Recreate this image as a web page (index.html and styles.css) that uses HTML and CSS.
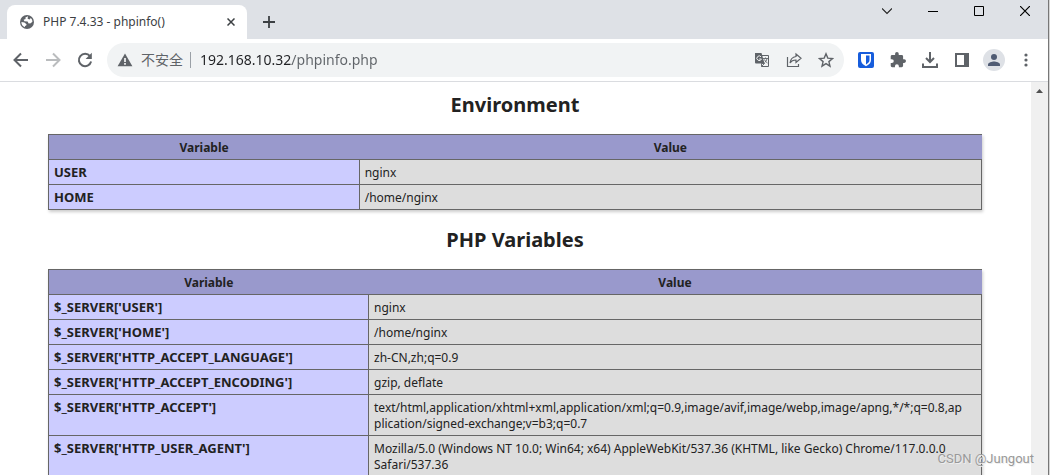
FILE: index.html
```html
<!DOCTYPE html>
<html lang="zh-CN">
<head>
<meta charset="utf-8">
<title>PHP 7.4.33 - phpinfo()</title>
<link rel="stylesheet" href="styles.css">
</head>
<body>
<div class="window">
  <header class="titlebar">
    <div class="tab">
      <svg class="globe" width="14" height="14" viewBox="0 0 14 14"><circle cx="7" cy="7" r="7" fill="#5f6368"/><path d="M8 1.3 5.4 2.6 5.6 4 3.6 4.7 4.4 6.2 7.6 6.5 8.6 8.4 10.8 8.2 12.5 6.5A5.6 5.6 0 0 0 10.8 3L9.6 4.4 7.6 3.8zM1.4 7 4.4 7.6 6.6 9.2 6.2 10.6 5 11 4.8 12.2A5.6 5.6 0 0 1 1.4 7z" fill="#fff"/></svg>
      <span class="tab-title">PHP 7.4.33 - phpinfo()</span>
      <button class="tab-close" aria-label="Close tab"><svg width="8" height="8" viewBox="0 0 8 8"><path d="M.5.5 7.500 7.500M7.500.5.5 7.500" stroke="#3c4043" stroke-width="1.500"/></svg></button>
    </div>
    <button class="new-tab" aria-label="New tab"><svg width="12" height="12" viewBox="0 0 12 12"><path d="M6 0v12M0 6h12" stroke="#3c4043" stroke-width="1.8"/></svg></button>
    <div class="captions">
      <button aria-label="Search tabs"><svg width="10" height="10" viewBox="0 0 10 10"><path d="M0 2.5 5 7.5 10 2.5" fill="none" stroke="#222" stroke-width="1.1"/></svg></button>
      <button aria-label="Minimize"><svg width="10" height="10" viewBox="0 0 10 10"><path d="M0 5.5h10" stroke="#000"/></svg></button>
      <button aria-label="Maximize"><svg width="10" height="10" viewBox="0 0 10 10"><path d="M.5.5h9v9h-9z" fill="none" stroke="#000"/></svg></button>
      <button aria-label="Close"><svg width="10" height="10" viewBox="0 0 10 10"><path d="M0 0 10 10M10 0 0 10" stroke="#000" stroke-width="1.2"/></svg></button>
    </div>
  </header>

  <nav class="toolbar">
    <button class="nav-button" aria-label="Back"><svg width="16" height="16" viewBox="0 0 16 16"><path d="M15 8H2M8 1.5 1.5 8 8 14.500" fill="none" stroke="#5f6368" stroke-width="2"/></svg></button>
    <button class="nav-button" aria-label="Forward" disabled><svg width="16" height="16" viewBox="0 0 16 16"><path d="M1 8H14M8 1.500 14.500 8 8 14.500" fill="none" stroke="#babcbe" stroke-width="2"/></svg></button>
    <button class="nav-button" aria-label="Reload"><svg width="16" height="16" viewBox="0 0 16 16"><path d="M13 4.200A6.200 6.200 0 1 0 14.100 9.500" fill="none" stroke="#5f6368" stroke-width="2"/><path d="M14.800.8V7H8.600z" fill="#5f6368"/></svg></button>
    <div class="address">
      <svg width="16" height="14" viewBox="0 0 16 14"><path d="M8 .4 15.400 13.300H.6z" fill="#5f6368"/><path d="M8 5v4M8 10v1.700" stroke="#fff" stroke-width="1.600"/></svg>
      <label class="security" for="url">不安全</label>
      <input class="url" id="url" type="text" value="192.168.10.32/phpinfo.php">
      <button aria-label="Translate"><svg width="16" height="16" viewBox="0 0 16 16"><path d="M5.500 3.500h9v11h-7" fill="none" stroke="#5f6368"/><path d="M1 1h6.500l3 10.500H2A1 1 0 0 1 1 10.500z" fill="#5f6368"/><path d="M7 4.800A2.300 2.300 0 1 0 7.400 7H5.200" fill="none" stroke="#f1f3f4" stroke-width="1"/><path d="M9 6.500h5M11.500 5.500v1M13 6.500c-.4 2-1.500 3.500-2.500 4.300M10.500 7.500c.5 1.500 1.500 2.600 3 3.500M7.500 11.500v3l3-3z" fill="none" stroke="#5f6368" stroke-width=".9"/></svg></button>
      <button aria-label="Share"><svg width="16" height="16" viewBox="0 0 16 16"><path d="M1.500 5v9.500h11V12M10 2l5 4.200-5 4.200V8C7.500 7.900 5.500 8.700 4 11c.4-3.500 2.600-6 6-6.500z" fill="none" stroke="#5f6368" stroke-width="1.200"/></svg></button>
      <button aria-label="Bookmark"><svg width="16" height="16" viewBox="0 0 16 16"><path d="m8 1.800 1.800 4.300 4.700.4-3.600 3.100 1.100 4.600L8 11.700l-4 2.500 1.100-4.600L1.500 6.500l4.700-.4z" fill="none" stroke="#5f6368" stroke-width="1.400"/></svg></button>
    </div>
    <div class="extensions">
      <button aria-label="Bitwarden"><svg width="16" height="16" viewBox="0 0 16 16"><rect width="16" height="16" rx="2" fill="#175ddc"/><path d="M3 2h10v6c0 3-2.200 4.800-5 6.300C5.200 12.800 3 11 3 8z" fill="#fff"/><path d="M8 3.500h3.500V8c0 2-1.500 3.300-3.500 4.500z" fill="#175ddc"/></svg></button>
      <button aria-label="Extensions"><svg width="16" height="16" viewBox="1 1 22 22"><path fill="#5f6368" d="M20.500 11H19V7a2 2 0 0 0-2-2h-4V3.500a2.500 2.500 0 0 0-5 0V5H4a2 2 0 0 0-2 2v3.800h1.500a2.700 2.700 0 0 1 0 5.400H2V20a2 2 0 0 0 2 2h3.800v-1.500a2.700 2.700 0 0 1 5.400 0V22H17a2 2 0 0 0 2-2v-4h1.500a2.500 2.500 0 0 0 0-5z"/></svg></button>
      <button aria-label="Downloads"><svg width="16" height="16" viewBox="0 0 16 16"><path d="M8 0v9.500M4 6l4 4 4-4M1 11.500V15h14v-3.500" fill="none" stroke="#5f6368" stroke-width="2"/></svg></button>
      <button aria-label="Side panel"><svg width="14" height="14" viewBox="0 0 14 14"><path d="M0 0h14v14H0zM2 2v10h7V2z" fill="#5f6368" fill-rule="evenodd"/></svg></button>
      <button class="profile" aria-label="Profile"><svg width="22" height="22" viewBox="0 0 22 22"><circle cx="11" cy="11" r="11" fill="#dee1e6"/><circle cx="11" cy="8" r="3" fill="#4f5b73"/><path d="M5 17v-1.500c0-2 4-3 6-3s6 1 6 3V17z" fill="#4f5b73"/></svg></button>
      <button aria-label="Menu"><svg width="4" height="14" viewBox="0 0 4 14"><g fill="#5f6368"><circle cx="2" cy="2" r="1.600"/><circle cx="2" cy="7" r="1.600"/><circle cx="2" cy="12" r="1.600"/></g></svg></button>
    </div>
  </nav>

  <div class="viewport">
    <main class="page">
      <h2>Environment</h2>
      <table class="environment">
        <thead><tr><th scope="col">Variable</th><th scope="col">Value</th></tr></thead>
        <tbody>
          <tr><td>USER</td><td>nginx</td></tr>
          <tr><td>HOME</td><td>/home/nginx</td></tr>
        </tbody>
      </table>
      <h2>PHP Variables</h2>
      <table class="variables">
        <thead><tr><th scope="col">Variable</th><th scope="col">Value</th></tr></thead>
        <tbody>
          <tr><td>$_SERVER['USER']</td><td>nginx</td></tr>
          <tr><td>$_SERVER['HOME']</td><td>/home/nginx</td></tr>
          <tr><td>$_SERVER['HTTP_ACCEPT_LANGUAGE']</td><td>zh-CN,zh;q=0.9</td></tr>
          <tr><td>$_SERVER['HTTP_ACCEPT_ENCODING']</td><td>gzip, deflate</td></tr>
          <tr><td>$_SERVER['HTTP_ACCEPT']</td><td>text/html,application/xhtml+xml,application/xml;q=0.9,image/avif,image/webp,image/apng,*/*;q=0.8,ap<br>plication/signed-exchange;v=b3;q=0.7</td></tr>
          <tr><td>$_SERVER['HTTP_USER_AGENT']</td><td>Mozilla/5.0 (Windows NT 10.0; Win64; x64) AppleWebKit/537.36 (KHTML, like Gecko) Chrome/117.0.0.0<br>Safari/537.36</td></tr>
        </tbody>
      </table>
    </main>
    <div class="scrollbar"><svg width="7" height="4" viewBox="0 0 7 4"><path d="M3.500 0 7 4H0z" fill="#505050"/></svg></div>
  </div>
  <div class="watermark">CSDN @Jungout</div>
</div>
</body>
</html>
```
FILE: styles.css
```css
* { box-sizing: border-box; }

body {
  margin: 0;
  font-family: "Noto Sans", "Noto Sans CJK SC", sans-serif;
  background: #d5d5d5;
  color: #222;
}

button {
  display: flex;
  align-items: center;
  justify-content: center;
  padding: 0;
  border: 0;
  background: none;
}

svg { display: block; }

.window {
  position: relative;
  display: flex;
  flex-direction: column;
  height: 100vh;
  margin-right: 1px;
  overflow: hidden;
  border-right: 1px solid #777;
  background: #fff;
}

.titlebar {
  display: flex;
  align-items: flex-end;
  height: 39px;
  padding-left: 7px;
  background: #dee1e6;
}

.tab {
  display: flex;
  align-items: center;
  width: 240px;
  height: 34px;
  padding: 0 12px 0 13px;
  border-radius: 8px 8px 0 0;
  background: #fff;
}

.tab-title {
  flex: 1;
  margin-left: 9px;
  font-size: 12px;
  line-height: 16px;
  color: #3c4043;
}

.new-tab {
  width: 44px;
  height: 34px;
}

.captions {
  display: flex;
  align-self: flex-start;
  margin-left: auto;
}

.captions button {
  width: 46px;
  height: 22px;
}

.toolbar {
  display: flex;
  align-items: center;
  height: 43px;
  padding: 0 6px 0 5px;
  border-bottom: 1px solid #dadce0;
}

.nav-button {
  width: 32px;
  height: 32px;
}

.address {
  display: flex;
  flex: 1;
  align-items: center;
  height: 34px;
  margin-left: 6px;
  padding: 0 2px 0 10px;
  border-radius: 17px;
  background: #f1f3f4;
}

.security {
  margin-left: 8px;
  padding-right: 7px;
  border-right: 1px solid #9aa0a6;
  font-size: 14px;
  line-height: 16px;
  color: #5f6368;
}

.url {
  flex: 1;
  min-width: 0;
  height: 24px;
  margin-left: 9px;
  padding: 0;
  border: 0;
  font: 14px/24px "Noto Sans", sans-serif;
  background: linear-gradient(90deg, #202124 92px, #5f6368 92px);
  background-clip: text;
  -webkit-text-fill-color: transparent;
}

.address button {
  width: 32px;
  height: 32px;
}

.extensions {
  display: flex;
  align-items: center;
  margin-left: 6px;
}

.extensions button {
  width: 32px;
  height: 32px;
}

.viewport {
  display: flex;
  flex: 1;
  min-height: 0;
}

.page {
  flex: 1;
  padding: 0 49px 0 48px;
  overflow: hidden;
}

h2 {
  margin: 8px 0 15px;
  font-size: 20px;
  line-height: 29px;
  text-align: center;
}

table {
  width: 100%;
  margin-bottom: 15px;
  border-collapse: collapse;
  table-layout: fixed;
  box-shadow: 1px 2px 3px #ccc;
  font-size: 12px;
  line-height: 16px;
}

th,
td {
  padding: 5px 5px 3px;
  border: 1px solid #666;
}

th {
  border-right: 0;
  border-left: 0;
  background: #99c;
}

th:first-child { border-left: 1px solid #666; }

td {
  background: #ddd;
  vertical-align: top;
  white-space: nowrap;
}

td:first-child {
  padding: 4px 5px;
  background: #ccf;
  font-size: 13px;
  font-weight: 700;
}

.environment th:first-child { width: 33.3%; }
.variables th:first-child { width: 34.3%; }

.scrollbar {
  display: flex;
  justify-content: center;
  width: 17px;
  padding-top: 7px;
  background: #f0f0f0;
}

.watermark {
  position: absolute;
  right: 14px;
  bottom: 8px;
  font: 13px/16px Roboto, sans-serif;
  color: #999;
  text-shadow: 1px 1px #eee;
}
```
